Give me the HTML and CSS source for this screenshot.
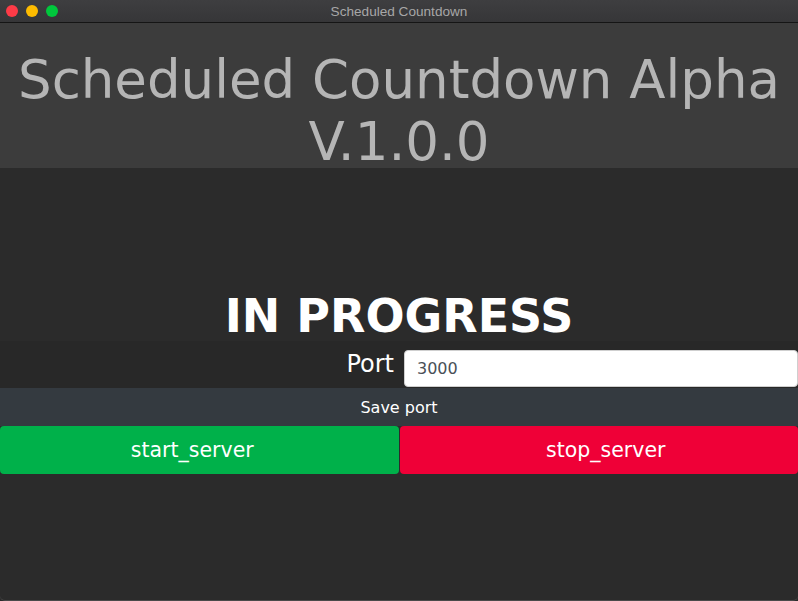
FILE: index.html
```html
<!DOCTYPE html>
<html>
<head>
<meta charset="utf-8">
<title>Scheduled Countdown</title>
<link rel="stylesheet" href="styles.css">
</head>
<body>
<div class="window">
  <div class="titlebar">
    <div class="lights">
      <span class="light red"></span>
      <span class="light yellow"></span>
      <span class="light green"></span>
    </div>
    <div class="title">Scheduled Countdown</div>
  </div>
  <div class="content">
    <header class="header">
      <h1 class="app-title">Scheduled Countdown Alpha V.1.0.0</h1>
    </header>
    <div class="status">IN PROGRESS</div>
    <div class="port-row">
      <label class="port-label" for="port">Port</label>
      <input class="port-input" id="port" type="text" value="3000">
    </div>
    <button class="save-btn">Save port</button>
    <div class="server-btns">
      <button class="srv-btn start">start_server</button>
      <button class="srv-btn stop">stop_server</button>
    </div>
  </div>
</div>
</body>
</html>
```

FILE: styles.css
```css
html, body {
  margin: 0;
  padding: 0;
  background: #2b2b2b;
}
body {
  font-family: "DejaVu Sans", Verdana, sans-serif;
}
.window {
  width: 798px;
  height: 601px;
  display: flex;
  flex-direction: column;
  box-sizing: border-box;
  border-bottom: 1px solid #4a4a4a;
  border-radius: 0 0 5px 5px;
  overflow: hidden;
  background: #2b2b2b;
}
.titlebar {
  height: 22px;
  flex: none;
  display: flex;
  align-items: center;
  justify-content: center;
  position: relative;
  background: linear-gradient(#3e3e40, #363638);
  border-bottom: 1px solid #151515;
}
.lights {
  position: absolute;
  left: 6px;
  top: 5px;
  display: flex;
  gap: 8px;
}
.light {
  width: 12px;
  height: 12px;
  border-radius: 50%;
  display: block;
}
.light.red { background: #fe3b47; }
.light.yellow { background: #febc00; }
.light.green { background: #00c83c; }
.title {
  font-family: "Liberation Sans", Arial, sans-serif;
  font-size: 13.6px;
  color: #a7a7a7;
}
.content {
  flex: 1;
  display: flex;
  flex-direction: column;
}
.header {
  height: 145px;
  flex: none;
  background: #3c3c3c;
  box-sizing: border-box;
  padding-top: 26px;
}
.app-title {
  margin: 0;
  text-align: center;
  font-weight: normal;
  font-size: 53px;
  line-height: 62px;
  color: #b5b5b5;
}
.status {
  margin-top: 123px;
  height: 50px;
  line-height: 50px;
  text-align: center;
  font-weight: bold;
  font-size: 46px;
  color: #ffffff;
}
.port-row {
  height: 47px;
  box-sizing: border-box;
  background: #282828;
  display: grid;
  grid-template-columns: 1fr 1fr;
  align-items: end;
  padding-bottom: 1px;
}
.port-label {
  text-align: right;
  padding-right: 5px;
  font-size: 24px;
  color: #ffffff;
  line-height: 37px;
  padding-bottom: 4px;
}
.port-input {
  margin-left: 5px;
  height: 37px;
  box-sizing: border-box;
  border: 1px solid #cfcfcf;
  border-radius: 4px;
  padding: 0 12px;
  font-family: "DejaVu Sans", Verdana, sans-serif;
  font-size: 16px;
  color: #495057;
  background: #ffffff;
  outline: none;
}
.save-btn {
  height: 38px;
  border: none;
  background: #343a40;
  color: #ffffff;
  font-family: "DejaVu Sans", Verdana, sans-serif;
  font-size: 16px;
  padding: 0;
}
.server-btns {
  display: flex;
  gap: 1px;
  height: 48px;
}
.srv-btn {
  flex: 1;
  border: none;
  border-radius: 4px;
  color: #ffffff;
  font-family: "DejaVu Sans", Verdana, sans-serif;
  font-size: 20.5px;
  padding: 0;
}
.srv-btn.start { background: #00b14a; padding-right: 14px; }
.srv-btn.stop { background: #ef0037; padding-left: 14px; }
```
